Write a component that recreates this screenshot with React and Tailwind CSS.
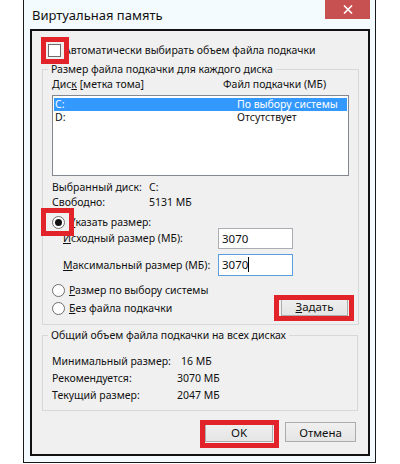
import React from "react";

const Radio = ({ checked }) => (
  <span className="w-[13px] h-[13px] rounded-full border border-[#6e6e6e] bg-white flex items-center justify-center shrink-0">
    {checked && <span className="w-[7px] h-[7px] rounded-full bg-[#111]"></span>}
  </span>
);

const WinButton = ({ children, className = "" }) => (
  <div className={"h-[20px] border border-[#acacac] bg-gradient-to-b from-[#f0f0f0] to-[#e5e5e5] flex items-center justify-center text-[11.5px] " + className}>{children}</div>
);

const Mark = ({ className }) => <div className={"absolute border-[5px] border-[#e2232a] " + className}></div>;

export default function App() {
  return (
    <div className="w-[400px] h-[464px] bg-white overflow-hidden relative text-[10.5px] leading-[15px] text-[#111] whitespace-nowrap font-['Noto_Sans',sans-serif]">
      <div className="ml-[23px] w-[353px] h-[463px] border border-t-0 border-[#1a1a1a] bg-[#f3fbfe] flex flex-col">
        {/* title bar */}
        <div className="h-[29px] flex justify-between items-start">
          <span className="pl-[8px] pt-[7px] text-[13px] leading-[17px]">Виртуальная память</span>
          <div className="w-[45px] h-[19px] mr-[5px] bg-[#c75050] flex items-center justify-center">
            <svg width="10" height="9" viewBox="0 0 10 9">
              <path d="M1 0.5 L9 8.5 M9 0.5 L1 8.5" stroke="#fff" strokeWidth="1.6" fill="none" />
            </svg>
          </div>
        </div>

        {/* client area */}
        <div className="ml-[6px] w-[340px] h-[427px] border-2 border-[#111] bg-[#f0f0f0] flex flex-col">
          <div className="mt-[13px] ml-[16px] flex items-center gap-[3px] h-[13px]">
            <span className="w-[13px] h-[13px] border border-[#6e6e6e] bg-white shrink-0"></span>
            <span><u className="no-underline">А</u>втоматически выбирать объем файла подкачки</span>
          </div>

          <fieldset className="mt-[5px] mx-[10px] border border-[#d5d9dc] px-[9px] pb-[8px]">
            <legend className="ml-[-4px] px-[3px]">Размер файла подкачки для каждого диска</legend>
            <div className="flex">
              <span className="w-[171px]">Дис<u>к</u> [метка тома]</span>
              <span>Файл подкачки (МБ)</span>
            </div>
            <div className="mt-[3px] w-[297px] h-[81px] border border-[#828790] bg-white pt-[2px] px-[1px]">
              <div className="flex h-[13px] leading-[13px] bg-[#3399ff] text-white">
                <span className="w-[183px] pl-[1px]">C:</span>
                <span>По выбору системы</span>
              </div>
              <div className="flex h-[13px] leading-[13px]">
                <span className="w-[183px] pl-[1px]">D:</span>
                <span>Отсутствует</span>
              </div>
            </div>

            <div className="mt-[4px] flex">
              <span className="w-[97px]">Выбранный диск:</span>
              <span>C:</span>
            </div>
            <div className="flex">
              <span className="w-[97px]">Свободно:</span>
              <span>5131 МБ</span>
            </div>

            <div className="mt-[6px] flex items-center gap-[4px] h-[12px]">
              <Radio checked />
              <span><u>У</u>казать размер:</span>
            </div>
            <div className="flex items-center pl-[11px]">
              <span className="w-[155px]"><u>И</u>сходный размер (МБ):</span>
              <div className="w-[75px] h-[21px] border border-[#abadb3] bg-white pl-[3px] pt-[2px] text-[11.5px]">3070</div>
            </div>
            <div className="mt-[5px] flex items-center pl-[11px]">
              <span className="w-[155px]"><u>М</u>аксимальный размер (МБ):</span>
              <div className="w-[75px] h-[22px] border border-[#5a9ee0] bg-white pl-[3px] pt-[2px] text-[11.5px] flex items-start">
                3070<span className="w-[1px] h-[15px] bg-black"></span>
              </div>
            </div>

            <div className="mt-[7px] flex justify-between items-end">
              <div className="flex flex-col gap-[3px]">
                <div className="flex items-center gap-[4px]">
                  <Radio />
                  <span><u>Р</u>азмер по выбору системы</span>
                </div>
                <div className="flex items-center gap-[4px]">
                  <Radio />
                  <span><u>Б</u>ез файла подкачки</span>
                </div>
              </div>
              <WinButton className="w-[67px] h-[19px] mr-[1px]">
                <span><u>З</u>адать</span>
              </WinButton>
            </div>
          </fieldset>

          <fieldset className="mt-[3px] mx-[10px] border border-[#d5d9dc] px-[9px] pb-[7px]">
            <legend className="ml-[-4px] px-[3px]">Общий объем файла подкачки на всех дисках</legend>
            <div className="mt-[11px] flex flex-col gap-[2px]">
              <div className="flex">
                <span className="w-[125px]">Минимальный размер:</span>
                <span className="pl-[4px]">16 МБ</span>
              </div>
              <div className="flex">
                <span className="w-[125px]">Рекомендуется:</span>
                <span>3070 МБ</span>
              </div>
              <div className="flex">
                <span className="w-[125px]">Текущий размер:</span>
                <span>2047 МБ</span>
              </div>
            </div>
          </fieldset>

          <div className="mt-[11px] mr-[12px] flex justify-end gap-[12px]">
            <WinButton className="w-[68px]">OK</WinButton>
            <WinButton className="w-[71px]">Отмена</WinButton>
          </div>
        </div>
      </div>

      <Mark className="left-[41px] top-[37px] w-[28px] h-[27px]" />
      <Mark className="left-[41px] top-[208px] w-[33px] h-[28px]" />
      <Mark className="left-[274px] top-[295px] w-[80px] h-[26px]" />
      <Mark className="left-[200px] top-[420px] w-[79px] h-[28px]" />
    </div>
  );
}
